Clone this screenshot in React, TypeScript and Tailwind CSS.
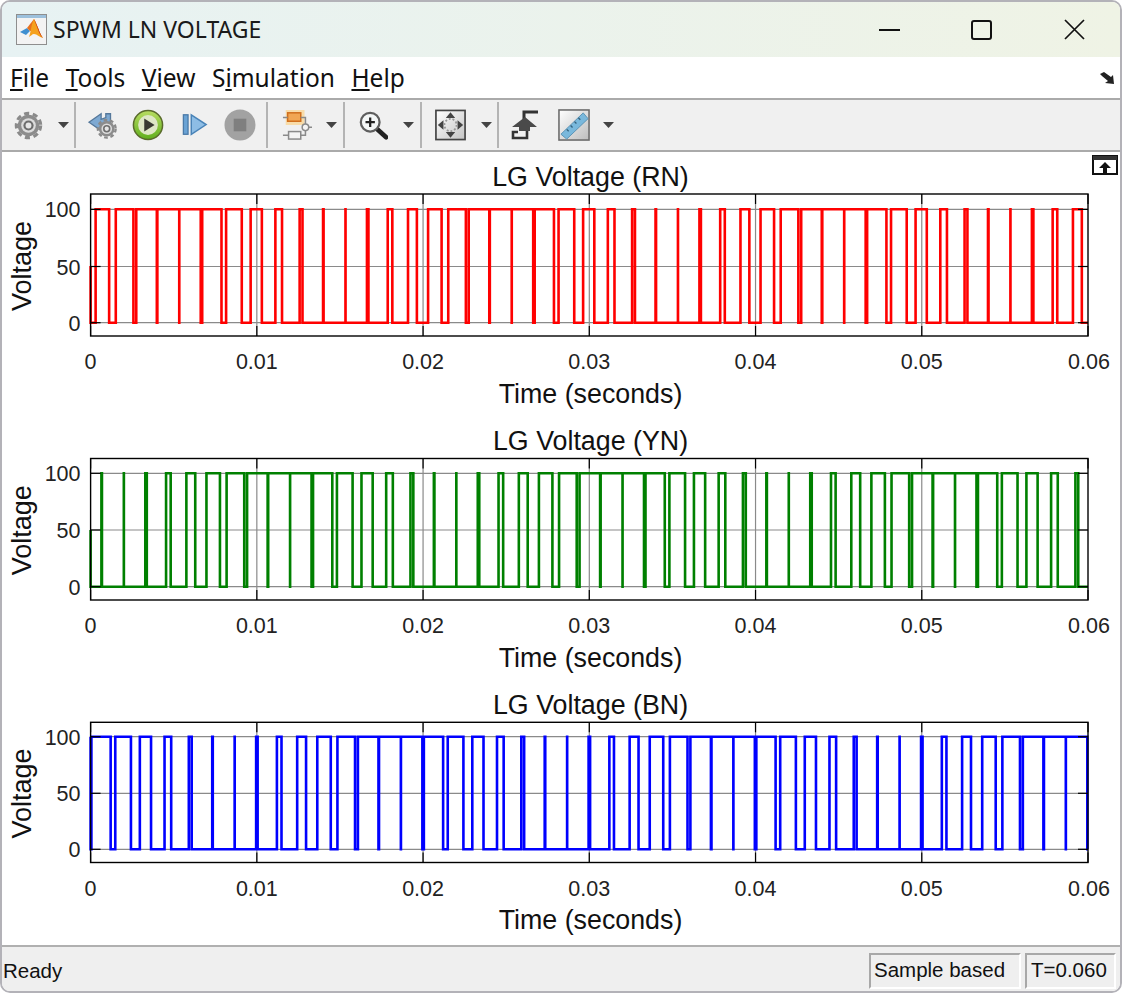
import React from "react";

const X0 = 88.6;
const X1 = 1086;
const xOf = (t: number) => X0 + (t / 0.06) * (X1 - X0);
const xTicks = [0, 0.01, 0.02, 0.03, 0.04, 0.05, 0.06];

// SPWM: 50 Hz sine against a 750 Hz triangle carrier
const carrier = (t: number) => {
  const p = (t * 750) % 1;
  return 4 * Math.abs(p - 0.5) - 1;
};

const buildEdges = (phase: number) => {
  const out: [number, number][] = [];
  let prev = -1;
  for (let i = 0; i <= 60000; i++) {
    const t = i * 1e-6;
    const level = Math.sin(2 * Math.PI * 50 * t + phase) > carrier(t) ? 100 : 0;
    if (level !== prev) {
      if (prev >= 0) out.push([t, prev]);
      out.push([t, level]);
      prev = level;
    }
  }
  out.push([0.06, prev]);
  return out;
};

type PlotProps = {
  title: string;
  color: string;
  phase: number;
  start: number;
  top: number;
  y100: number;
  y50: number;
  y0: number;
  bottom: number;
  height: number;
};

const Plot = ({ title, color, phase, start, top, y100, y50, y0, bottom, height }: PlotProps) => {
  const yOf = (v: number) => y0 + (v / 100) * (y100 - y0);
  const edges = buildEdges(phase);
  const points = [`${X0},${yOf(start)}`, ...edges.map(([t, v]) => `${xOf(t).toFixed(2)},${yOf(v).toFixed(2)}`)].join(" ");
  const midY = (top + bottom) / 2;

  return (
    <div className="flex flex-col">
      <div className="h-[28px] pl-[88px] text-center text-[26.8px] leading-[28px] w-[1089px]">{title}</div>
      <svg className="block w-full" style={{ height }} viewBox={`0 0 1118 ${height}`}>
        {xTicks.slice(1, 6).map((t) => (
          <line key={t} x1={xOf(t)} x2={xOf(t)} y1={top} y2={bottom} stroke="#8a8a8a" strokeWidth="1.2" />
        ))}
        {[y100, y50, y0].map((y) => (
          <line key={y} x1={X0} x2={X1} y1={y} y2={y} stroke="#8a8a8a" strokeWidth="1.2" />
        ))}
        <polyline points={points} fill="none" stroke={color} strokeWidth="2.6" strokeLinejoin="miter" />
        <rect x={X0} y={top} width={X1 - X0} height={bottom - top} fill="none" stroke="#000" strokeWidth="1.4" />
        {xTicks.map((t) => (
          <g key={t}>
            <line x1={xOf(t)} x2={xOf(t)} y1={top} y2={top + 10} stroke="#000" strokeWidth="1.2" />
            <line x1={xOf(t)} x2={xOf(t)} y1={bottom} y2={bottom - 10} stroke="#000" strokeWidth="1.2" />
            <text x={xOf(t) + (t === 0.06 ? 1 : 0)} y={bottom + 33} textAnchor="middle" fontSize="21.5" fill="#222">
              {t === 0 ? "0" : t.toFixed(2)}
            </text>
          </g>
        ))}
        {[
          [y100, "100"],
          [y50, "50"],
          [y0, "0"],
        ].map(([y, label]) => (
          <g key={label}>
            <line x1={X0} x2={X0 + 10} y1={y} y2={y} stroke="#000" strokeWidth="1.2" />
            <line x1={X1} x2={X1 - 10} y1={y} y2={y} stroke="#000" strokeWidth="1.2" />
            <text x={78.5} y={Number(y) + 8} textAnchor="end" fontSize="21.5" fill="#222">
              {label}
            </text>
          </g>
        ))}
        <text transform={`translate(29 ${midY + 1}) rotate(-90)`} textAnchor="middle" fontSize="27" fill="#111">
          Voltage
        </text>
      </svg>
      <div className="h-[28px] pl-[88px] text-center text-[26.8px] leading-[28px] w-[1089px]">Time (seconds)</div>
    </div>
  );
};

const Caret = ({ className }: { className: string }) => (
  <svg className={className} width="11" height="6" viewBox="0 0 11 6">
    <path d="M0 0h11L5.5 6z" fill="#444" />
  </svg>
);

const Sep = ({ className }: { className: string }) => <div className={`w-[2px] h-[46px] bg-[#b4b4b4] ${className}`} />;

const MatlabLogo = () => (
  <svg width="31" height="31" viewBox="0 0 31 31" className="shrink-0">
    <rect x="0.5" y="0.5" width="30" height="30" fill="#f3f3f3" stroke="#8e8e8e" />
    <rect x="1" y="1" width="29" height="3" fill="#9cc0dc" />
    <path d="M4 18l7-4 3 3-4 4z" fill="#3f8fd0" />
    <path d="M11 14l7-9 5 11-9 1z" fill="#e8701c" />
    <path d="M18 5c3 5 5 13 9 19-4-1-6-4-9-4-2 0-3 2-5 3 2-5 2-12 5-18z" fill="#f5a11d" />
    <path d="M18 5c3 5 5 13 9 19-3-2-5-8-9-19z" fill="#c8371b" />
  </svg>
);

const GearShape = ({ cx, cy, r }: { cx: number; cy: number; r: number }) => (
  <g>
    <circle cx={cx} cy={cy} r={r} fill="none" stroke="#8a8a8a" strokeWidth={r * 0.26} strokeDasharray={`${r * 0.42} ${r * 0.3}`} />
    <circle cx={cx} cy={cy} r={r * 0.88} fill="#8c8c8c" />
    <circle cx={cx} cy={cy} r={r * 0.6} fill="#dcdcdc" />
    <circle cx={cx} cy={cy} r={r * 0.42} fill="#6e6e6e" />
    <circle cx={cx} cy={cy} r={r * 0.24} fill="#e6e6e6" />
  </g>
);

const App = () => {
  return (
    <div className="w-[1124px] h-[995px] bg-white overflow-hidden" style={{ fontFamily: '"Liberation Sans", Arial, sans-serif' }}>
      <div className="ml-0 w-[1122px] h-[993px] border-2 border-[#b3b2b8] rounded-[10px] overflow-hidden flex flex-col bg-white text-[#111]">
        {/* title bar */}
        <div className="h-[55px] shrink-0 flex items-center pl-[14px] bg-gradient-to-r from-[#e7f2f3] to-[#eff3e5]">
          <MatlabLogo />
          <span className="ml-[6px] text-[23px] text-[#1a1a1a]" style={{ fontFamily: '"Noto Sans", sans-serif' }}>
            SPWM LN VOLTAGE
          </span>
          <div className="ml-auto flex items-center pr-[35px]">
            <div className="w-[21px] h-[2px] bg-[#111]" />
            <div className="ml-[71px] w-[21px] h-[20px] border-2 border-[#111] rounded-[3px]" />
            <svg className="ml-[72px]" width="21" height="21" viewBox="0 0 21 21">
              <path d="M1 1l19 19M20 1L1 20" stroke="#111" strokeWidth="1.7" />
            </svg>
          </div>
        </div>

        {/* menu */}
        <div className="h-[43px] shrink-0 flex items-center pl-[8px] pt-[2px] gap-[16.5px] border-b-2 border-[#aaaaaa] text-[24.5px] text-[#111] relative" style={{ fontFamily: '"Noto Sans", sans-serif' }}>
          <span><u className="underline-offset-2">F</u>ile</span>
          <span><u className="underline-offset-2">T</u>ools</span>
          <span><u className="underline-offset-2">V</u>iew</span>
          <span>S<u className="underline-offset-2">i</u>mulation</span>
          <span><u className="underline-offset-2">H</u>elp</span>
          <svg className="absolute right-[5px] top-[14px]" width="16" height="14" viewBox="0 0 16 14">
            <path d="M1 3l4-2 7 5 2-2 1 9-9-1 3-2-6-5z" fill="#222" />
          </svg>
        </div>

        {/* toolbar */}
        <div className="h-[52px] shrink-0 flex items-center bg-[#f0f0f0] border-b-2 border-[#aaaaaa]">
          <svg className="ml-[12px]" width="29" height="29" viewBox="0 0 31 31">
            <GearShape cx={15.5} cy={15.5} r={13} />
          </svg>
          <Caret className="ml-[15px]" />
          <Sep className="ml-[5px]" />
          <svg className="ml-[12px]" width="30" height="30" viewBox="0 0 32 32">
            <path d="M1 13L14 4v6l5-2V4h5v12H14v6z" fill="#7ea9d2" stroke="#55789b" strokeWidth="1.4" />
            <GearShape cx={20} cy={20} r={9.5} />
          </svg>
          <svg className="ml-[14px]" width="32" height="32" viewBox="0 0 34 34">
            <defs>
              <linearGradient id="pl" x1="0" y1="0" x2="0" y2="1">
                <stop offset="0" stopColor="#b9dd62" />
                <stop offset="1" stopColor="#5fae1c" />
              </linearGradient>
            </defs>
            <circle cx="17" cy="17" r="15.5" fill="url(#pl)" stroke="#5a6b2c" strokeWidth="1.6" />
            <circle cx="17" cy="17" r="10.5" fill="#dfe7c6" />
            <path d="M13 10l11 7-11 7z" fill="#3a3a32" />
          </svg>
          <svg className="ml-[18px]" width="26" height="26" viewBox="0 0 28 28">
            <rect x="1.5" y="3" width="5" height="21" fill="#6aa3d5" stroke="#4a7aa8" strokeWidth="1.4" />
            <path d="M10 3l16 10.5L10 24z" fill="#8dbde5" stroke="#4a84b8" strokeWidth="1.6" />
          </svg>
          <svg className="ml-[16px]" width="32" height="32" viewBox="0 0 33 33">
            <circle cx="16.5" cy="16.5" r="16" fill="#a2a2a2" />
            <rect x="10" y="10" width="13" height="13" fill="#7f7f7f" />
          </svg>
          <Sep className="ml-[10px]" />
          <svg className="ml-[14px]" width="30" height="32" viewBox="0 0 32 32">
            <rect x="4" y="0" width="20" height="16" fill="#fbd38a" opacity="0.7" />
            <rect x="6" y="3" width="14" height="9" fill="#f1a653" stroke="#d06e1d" strokeWidth="1.6" />
            <path d="M1 8h5M20 8h5v8M1 27h6M20 27h5v-6" fill="none" stroke="#8a8a8a" strokeWidth="1.6" />
            <rect x="7" y="23" width="13" height="8" fill="#f4f4f4" stroke="#8a8a8a" strokeWidth="1.6" />
            <circle cx="25" cy="18.5" r="3.5" fill="#f4f4f4" stroke="#8a8a8a" strokeWidth="1.6" />
            <path d="M28.5 18.5H32" stroke="#8a8a8a" strokeWidth="1.6" />
          </svg>
          <Caret className="ml-[14px]" />
          <Sep className="ml-[6px]" />
          <svg className="ml-[13px]" width="30" height="30" viewBox="0 0 32 32">
            <path d="M20 20l10 9" stroke="#222" strokeWidth="5" strokeLinecap="round" />
            <circle cx="13" cy="13" r="10" fill="#f4f7f7" stroke="#5f5f5f" strokeWidth="2.4" />
            <path d="M8 13h10M13 8v10" stroke="#222" strokeWidth="2.4" />
          </svg>
          <Caret className="ml-[15px]" />
          <Sep className="ml-[6px]" />
          <svg className="ml-[13px]" width="31" height="32" viewBox="0 0 33 33">
            <defs>
              <linearGradient id="ft" x1="0" y1="0" x2="1" y2="1">
                <stop offset="0" stopColor="#ffffff" />
                <stop offset="1" stopColor="#c4c4c4" />
              </linearGradient>
            </defs>
            <rect x="1" y="1" width="31" height="31" fill="url(#ft)" stroke="#444" strokeWidth="1.8" />
            <path d="M16.5 3l5 6h-10zM16.5 30l5-6h-10zM3 16.5l6-5v10zM30 16.5l-6-5v10z" fill="#444" />
            <circle cx="16.5" cy="16.5" r="6.5" fill="none" stroke="#999" strokeWidth="2" strokeDasharray="2 2" />
          </svg>
          <Caret className="ml-[15px]" />
          <Sep className="ml-[5px]" />
          <svg className="ml-[11px]" width="30" height="32" viewBox="0 0 30 32">
            <path d="M14 10V3h14" fill="none" stroke="#333" strokeWidth="3" />
            <path d="M15 8l12 10h-7v4H9v-4H2z" fill="#4a4a4a" />
            <path d="M8 23H3v6h14v-7" fill="none" stroke="#333" strokeWidth="2.6" />
          </svg>
          <svg className="ml-[18px]" width="32" height="32" viewBox="0 0 33 33">
            <defs>
              <linearGradient id="rl" x1="0" y1="0" x2="1" y2="1">
                <stop offset="0" stopColor="#ffffff" />
                <stop offset="1" stopColor="#bdbdbd" />
              </linearGradient>
            </defs>
            <rect x="1" y="1" width="31" height="31" fill="url(#rl)" stroke="#6a6a6a" strokeWidth="1.6" />
            <path d="M3 26L26 4l5 6-22 21z" fill="#79b8dc" stroke="#5a93b5" />
            <path d="M9 21l2 2M13 17l2 2M17 13l2 2M21 9l2 2" stroke="#34627e" strokeWidth="1.4" />
          </svg>
          <Caret className="ml-[13px]" />
        </div>

        {/* plots */}
        <div className="flex-1 relative flex flex-col gap-[19px] pt-[11px] bg-white">
          <svg className="absolute right-[2px] top-[3px]" width="26" height="20" viewBox="0 0 26 20">
            <rect x="1" y="1" width="24" height="18" fill="#fff" stroke="#111" strokeWidth="2" />
            <rect x="1" y="1" width="24" height="4" fill="#333" />
            <path d="M13 7l6 6h-4v5h-4v-5H7z" fill="#111" />
          </svg>
          <Plot title="LG Voltage (RN)" color="#ff0000" phase={0} start={50} top={3} y100={18.3} y50={75.5} y0={131.7} bottom={145} height={189} />
          <Plot title="LG Voltage (YN)" color="#008000" phase={(-2 * Math.PI) / 3} start={50} top={3.5} y100={18.3} y50={75} y0={131.7} bottom={145} height={189} />
          <Plot title="LG Voltage (BN)" color="#0000ff" phase={(2 * Math.PI) / 3} start={100} top={3.3} y100={17.7} y50={74.3} y0={130.3} bottom={143.5} height={187} />
        </div>

        {/* status bar */}
        <div className="h-[46px] shrink-0 flex items-center pt-[3px] border-t-2 border-[#b0b0b0] bg-[#efefef] text-[20.5px] text-[#111]">
          <span className="ml-[1px] pt-[2px]">Ready</span>
          <div className="ml-auto w-[152px] h-[36px] flex items-center pl-[3px] border-2 border-t-[#a8a8a8] border-l-[#a8a8a8] border-r-white border-b-white">Sample based</div>
          <div className="ml-[4px] mr-[4px] w-[91px] h-[36px] flex items-center pl-[4px] border-2 border-t-[#a8a8a8] border-l-[#a8a8a8] border-r-white border-b-white">T=0.060</div>
        </div>
      </div>
    </div>
  );
};

export default App;
